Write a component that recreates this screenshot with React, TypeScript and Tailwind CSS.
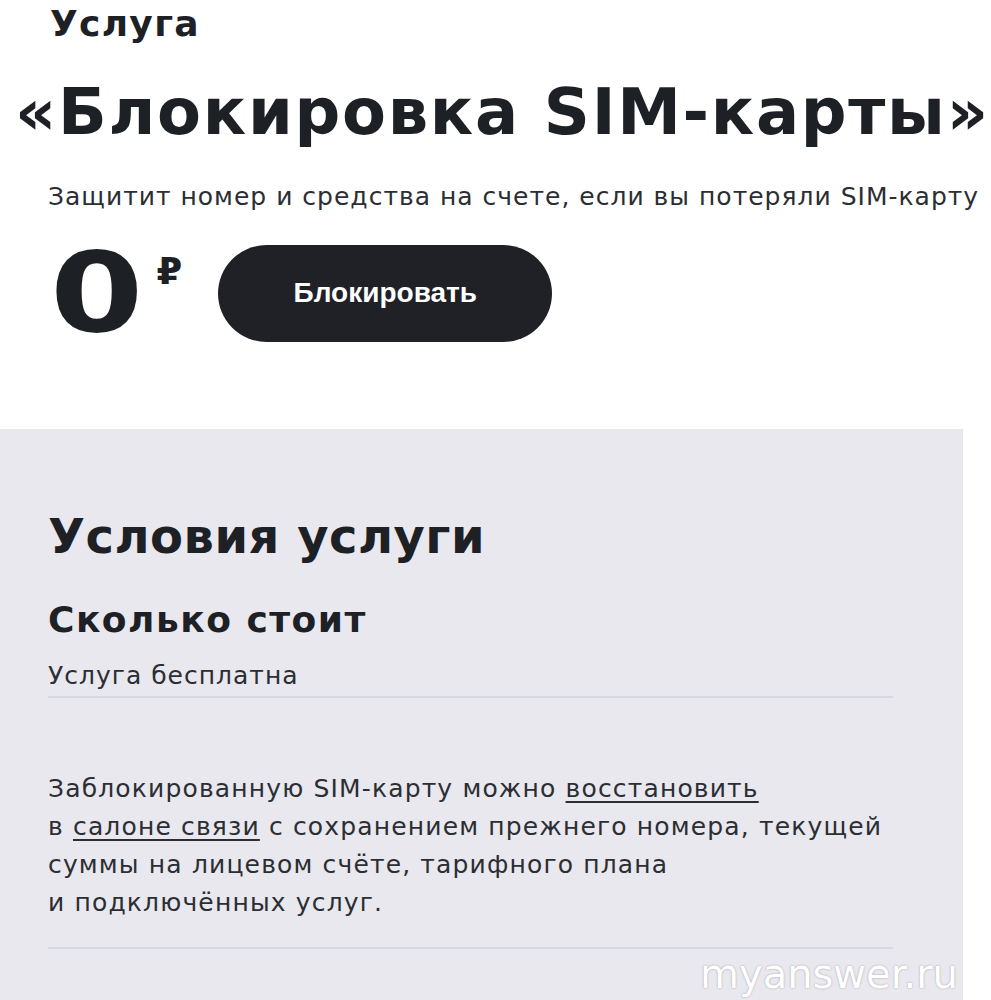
const wide = "font-['DejaVu_Sans',sans-serif] font-bold";
const body = "font-['DejaVu_Sans',sans-serif] text-[#2b2e33]";

export default function App() {
  return (
    <div className="relative w-[991px] h-[1000px] overflow-hidden bg-white text-[#1d2024]">
      {/* Top — service header */}
      <div className="pl-[50px] pt-[2px]">
        <div className={`${wide} text-[36px] leading-[44px] tracking-[1.3px]`}>Услуга</div>
      </div>
      <h1 className={`${wide} pl-[15px] mt-[28px] text-[64px] leading-[76px] tracking-[1.7px] whitespace-nowrap`}>
        «Блокировка SIM-карты»
      </h1>
      <p className={`${body} pl-[48px] mt-[31px] text-[25px] leading-[32px] tracking-[1px] whitespace-nowrap`}>
        Защитит номер и средства на счете, если вы потеряли SIM-карту
      </p>

      {/* Price + action */}
      <div className="flex items-center pl-[50px] mt-[25px]">
        <div className="flex items-start">
          <span className={`${wide} inline-block origin-left scale-x-[1.22] text-[110px] leading-[110px]`}>0</span>
          <span className={`${wide} ml-[30px] mt-[15px] text-[37px] leading-[37px]`}>₽</span>
        </div>
        <button className="ml-[36px] w-[334px] h-[97px] rounded-full bg-[#1f2127] text-white font-['Liberation_Sans',sans-serif] font-bold text-[28px]">
          Блокировать
        </button>
      </div>

      {/* Conditions panel */}
      <section className="mt-[81px] w-[963px] h-[600px] bg-[#e8e8ee] pl-[48px] pr-[70px] pt-[79px]">
        <h2 className={`${wide} text-[48px] leading-[56px] tracking-[0.5px]`}>Условия услуги</h2>
        <h3 className={`${wide} mt-[34px] text-[36px] leading-[44px] tracking-[1.5px]`}>Сколько стоит</h3>
        <p className={`${body} mt-[18px] text-[25px] leading-[32px] tracking-[1px]`}>Услуга бесплатна</p>
        <div className="mt-[4px] h-[2px] bg-[#d6d9df]" />
        <p className={`${body} mt-[72px] text-[25px] leading-[38px] tracking-[1.15px] whitespace-nowrap`}>
          Заблокированную SIM-карту можно <a className="underline underline-offset-4">восстановить</a>
          <br />
          в <a className="underline underline-offset-4">салоне связи</a> с сохранением прежнего номера, текущей
          <br />
          суммы на лицевом счёте, тарифного плана
          <br />и подключённых услуг.
        </p>
        <div className="mt-[25px] h-[2px] bg-[#d6d9df]" />
      </section>

      {/* Watermark */}
      <div className="absolute left-[700px] top-[944px] font-['DejaVu_Sans',sans-serif] text-[40px] text-white [text-shadow:0_0_2px_#9a9aa0]">
        myanswer.ru
      </div>
    </div>
  );
}
